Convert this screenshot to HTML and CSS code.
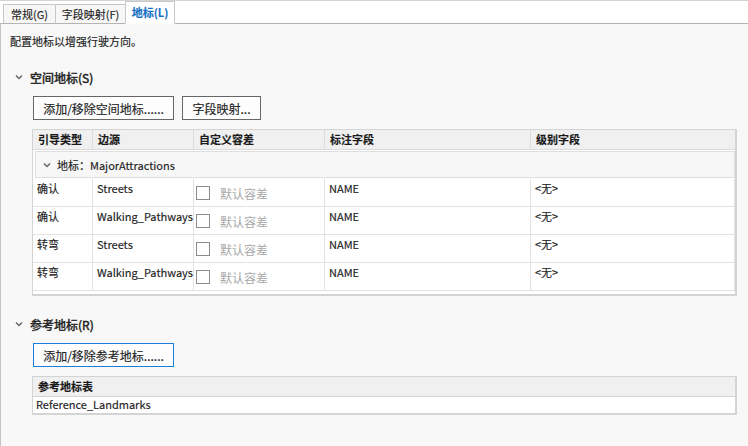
FILE: index.html
```html
<!DOCTYPE html>
<html lang="zh-CN">
<head>
<meta charset="utf-8">
<title>地标</title>
<link rel="stylesheet" href="styles.css">
</head>
<body>
<div class="tabbar">
  <div class="tab t1">常规(G)</div>
  <div class="tab t2">字段映射(F)</div>
  <div class="tab t3 active">地标(L)</div>
</div>
<div class="panel">
  <p class="desc">配置地标以增强行驶方向。</p>

  <section class="sec">
    <div class="sec-head">
      <svg class="chev" width="8" height="6" viewBox="0 0 8 6"><path d="M1 1.5 L4 4.5 L7 1.5" fill="none" stroke="#666" stroke-width="1.5"/></svg>
      <span>空间地标(S)</span>
    </div>
    <div class="btns">
      <button class="btn w140">添加/移除空间地标......</button>
      <button class="btn w79">字段映射...</button>
    </div>
    <div class="table">
      <div class="row head">
        <div class="c">引导类型</div>
        <div class="c">边源</div>
        <div class="c">自定义容差</div>
        <div class="c">标注字段</div>
        <div class="c last">级别字段</div>
      </div>
      <div class="group">
        <div class="group-box">
          <svg class="chev" width="8" height="6" viewBox="0 0 8 6"><path d="M1 1.5 L4 4.5 L7 1.5" fill="none" stroke="#666" stroke-width="1.5"/></svg>
          <span>地标：MajorAttractions</span>
        </div>
      </div>
      <div class="row data">
        <div class="c">确认</div>
        <div class="c">Streets</div>
        <div class="c chk"><span class="box"></span><span class="ph">默认容差</span></div>
        <div class="c">NAME</div>
        <div class="c last">&lt;无&gt;</div>
      </div>
      <div class="row data">
        <div class="c">确认</div>
        <div class="c">Walking_Pathways</div>
        <div class="c chk"><span class="box"></span><span class="ph">默认容差</span></div>
        <div class="c">NAME</div>
        <div class="c last">&lt;无&gt;</div>
      </div>
      <div class="row data">
        <div class="c">转弯</div>
        <div class="c">Streets</div>
        <div class="c chk"><span class="box"></span><span class="ph">默认容差</span></div>
        <div class="c">NAME</div>
        <div class="c last">&lt;无&gt;</div>
      </div>
      <div class="row data">
        <div class="c">转弯</div>
        <div class="c">Walking_Pathways</div>
        <div class="c chk"><span class="box"></span><span class="ph">默认容差</span></div>
        <div class="c">NAME</div>
        <div class="c last">&lt;无&gt;</div>
      </div>
    </div>
  </section>

  <section class="sec sec2">
    <div class="sec-head">
      <svg class="chev" width="8" height="6" viewBox="0 0 8 6"><path d="M1 1.5 L4 4.5 L7 1.5" fill="none" stroke="#666" stroke-width="1.5"/></svg>
      <span>参考地标(R)</span>
    </div>
    <div class="btns">
      <button class="btn w140 focus">添加/移除参考地标......</button>
    </div>
    <div class="table ref">
      <div class="ref-head">参考地标表</div>
      <div class="ref-row">Reference_Landmarks</div>
    </div>
  </section>
</div>
</body>
</html>
```

FILE: styles.css
```css
* { box-sizing: border-box; }
html, body { margin: 0; padding: 0; }
body {
  width: 748px;
  height: 446px;
  overflow: hidden;
  background: #f8f8f8;
  font-family: "Noto Sans CJK SC", "Noto Sans", sans-serif;
  font-size: 11px;
  color: #222;
  -webkit-text-stroke: 0.15px currentColor;
}

.tabbar {
  height: 24px;
  background: #fff;
  border-top: 1px solid #d4d4d4;
  border-bottom: 1px solid #b4b4b4;
  display: flex;
  align-items: flex-end;
  padding-left: 3px;
}
.tab {
  height: 20px;
  margin-bottom: -1px;
  border: 1px solid #c8c8c8;
  border-bottom: 1px solid #b4b4b4;
  border-right: none;
  background: #f7f7f7;
  line-height: 18px;
  color: #222;
  font-size: 11px;
  text-align: center;
  white-space: nowrap;
}
.tab.t1 { width: 52px; }
.tab.t2 { width: 70px; }
.tab.t3 { width: 50px; }
.tab.active {
  height: 23px;
  background: #fff;
  border-right: 1px solid #c8c8c8;
  border-bottom: 1px solid #fff;
  color: #1570c4;
  font-weight: bold;
  line-height: 20px;
}

.panel {
  border-left: 1px solid #c4c4c4;
  height: 422px;
  padding-top: 9px;
}
.desc {
  margin: 0 0 0 9px;
  line-height: 16px;
  height: 16px;
}

.sec { margin-top: 19px; }
.sec2 { margin-top: 19px; }
.sec-head {
  display: flex;
  align-items: center;
  height: 18px;
  padding-left: 14px;
  font-size: 12px;
  color: #222;
  -webkit-text-stroke: 0.45px currentColor;
}
.sec-head .chev { margin-right: 7px; }

.btns {
  display: flex;
  gap: 8px;
  margin: 10px 0 0 32px;
  height: 24px;
}
.btn {
  height: 24px;
  padding: 0;
  border: 1px solid #666;
  background: #fdfdfd;
  font-family: inherit;
  font-size: 12px;
  color: #222;
  text-align: center;
  white-space: nowrap;
  -webkit-text-stroke: 0.15px currentColor;
}
.btn.w140 { width: 141px; }
.btn.w79 { width: 79px; }
.btn.focus { border-color: #1a7fd9; }

.table {
  margin: 9px 11px 0 31px;
  border: 2px solid #d4d4d4;
  border-width: 1px 2px 2px 1px;
  background: #fff;
  padding-bottom: 3px;
}
.row {
  display: grid;
  grid-template-columns: 60px 101px 131px 206px 1fr;
}
.row.head {
  height: 20px;
  background: #f0f0f0;
  border-bottom: 1px solid #dadada;
  font-weight: bold;
  color: #1a1a1a;
}
.row.head .c {
  padding-left: 5px;
  line-height: 19px;
  border-right: 1px solid #dcdcdc;
}
.row .c.last { border-right: none; }

.group {
  height: 29px;
  padding: 1px 0 1px 2px;
}
.group-box {
  height: 27px;
  background: #f7f7f7;
  border: 1px solid #dedede;
  display: flex;
  align-items: center;
  padding-left: 7px;
}
.group-box .chev { margin-right: 6px; }

.row.data {
  height: 28px;
  border-bottom: 1px solid #e2e2e2;
}
.row.data .c {
  padding: 1px 0 0 4px;
  line-height: 16px;
  border-right: 1px solid #e2e2e2;
  white-space: nowrap;
  overflow: hidden;
}
.row.data .c.chk {
  display: flex;
  align-items: flex-start;
  padding: 7px 0 0 2px;
}
.box {
  width: 14px;
  height: 14px;
  border: 1px solid #8c8c8c;
  background: #fff;
  flex: none;
}
.ph {
  margin-left: 10px;
  color: #a8a8a8;
  font-size: 12px;
  line-height: 16px;
  -webkit-text-stroke: 0;
}

.table.ref {
  margin-top: 9px;
  padding-bottom: 0;
}
.ref-head {
  height: 20px;
  background: #f0f0f0;
  border-bottom: 1px solid #d4d4d4;
  font-weight: bold;
  color: #1a1a1a;
  padding-left: 5px;
  line-height: 19px;
}
.ref-row {
  height: 16px;
  line-height: 15px;
  padding-left: 3px;
}
```
